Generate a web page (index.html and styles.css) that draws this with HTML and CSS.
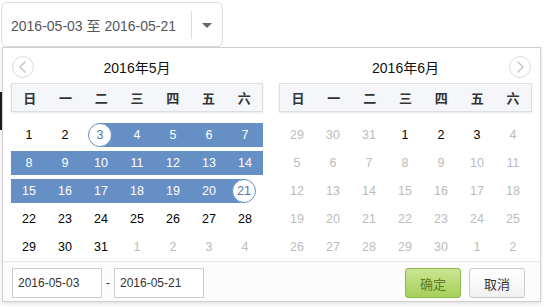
FILE: index.html
```html
<!DOCTYPE html>
<html lang="zh-CN">
<head>
<meta charset="utf-8">
<title>日期范围选择</title>
<link rel="stylesheet" href="styles.css">
</head>
<body>
<div class="stage">
  <div class="behind"></div>
  <div class="picker">
    <div class="value">2016-05-03 至 2016-05-21</div>
    <div class="sep"></div>
    <div class="caret-box"><span class="caret"></span></div>
  </div>
  <div class="panel">
    <div class="months">
      <div class="month">
        <div class="month-head">
          <button class="nav"><svg viewBox="0 0 22 22" width="22" height="22"><polyline points="13,6 8,11 13,16" fill="none" stroke="#c8c8c8" stroke-width="1.6" stroke-linecap="round" stroke-linejoin="round"/></svg></button>
          <div class="title">2016年5月</div>
          <div></div>
        </div>
        <div class="week"><span>日</span><span>一</span><span>二</span><span>三</span><span>四</span><span>五</span><span>六</span></div>
        <div class="days">
          <div class="day">1</div><div class="day">2</div><div class="day start"><span class="ring">3</span></div><div class="day in">4</div><div class="day in">5</div><div class="day in">6</div><div class="day in">7</div>
          <div class="day in">8</div><div class="day in">9</div><div class="day in">10</div><div class="day in">11</div><div class="day in">12</div><div class="day in">13</div><div class="day in">14</div>
          <div class="day in">15</div><div class="day in">16</div><div class="day in">17</div><div class="day in">18</div><div class="day in">19</div><div class="day in">20</div><div class="day end"><span class="ring">21</span></div>
          <div class="day">22</div><div class="day">23</div><div class="day">24</div><div class="day">25</div><div class="day">26</div><div class="day">27</div><div class="day">28</div>
          <div class="day">29</div><div class="day">30</div><div class="day">31</div><div class="day off">1</div><div class="day off">2</div><div class="day off">3</div><div class="day off">4</div>
        </div>
      </div>
      <div class="month">
        <div class="month-head">
          <div></div>
          <div class="title">2016年6月</div>
          <button class="nav"><svg viewBox="0 0 22 22" width="22" height="22"><polyline points="9,6 14,11 9,16" fill="none" stroke="#c8c8c8" stroke-width="1.6" stroke-linecap="round" stroke-linejoin="round"/></svg></button>
        </div>
        <div class="week"><span>日</span><span>一</span><span>二</span><span>三</span><span>四</span><span>五</span><span>六</span></div>
        <div class="days">
          <div class="day off">29</div><div class="day off">30</div><div class="day off">31</div><div class="day">1</div><div class="day">2</div><div class="day">3</div><div class="day off">4</div>
          <div class="day off">5</div><div class="day off">6</div><div class="day off">7</div><div class="day off">8</div><div class="day off">9</div><div class="day off">10</div><div class="day off">11</div>
          <div class="day off">12</div><div class="day off">13</div><div class="day off">14</div><div class="day off">15</div><div class="day off">16</div><div class="day off">17</div><div class="day off">18</div>
          <div class="day off">19</div><div class="day off">20</div><div class="day off">21</div><div class="day off">22</div><div class="day off">23</div><div class="day off">24</div><div class="day off">25</div>
          <div class="day off">26</div><div class="day off">27</div><div class="day off">28</div><div class="day off">29</div><div class="day off">30</div><div class="day off">1</div><div class="day off">2</div>
        </div>
      </div>
    </div>
    <div class="footer">
      <input class="date-input" type="text" value="2016-05-03">
      <span class="dash">-</span>
      <input class="date-input" type="text" value="2016-05-21">
      <div class="spacer"></div>
      <button class="btn ok">确定</button>
      <button class="btn cancel">取消</button>
    </div>
  </div>
</div>
</body>
</html>
```
FILE: styles.css
```css
html, body {
  margin: 0;
  padding: 0;
  background: #fff;
}
.stage {
  position: relative;
  width: 548px;
  height: 307px;
  overflow: hidden;
  font-family: "Liberation Sans", "Noto Sans CJK SC", sans-serif;
}
.behind {
  position: absolute;
  left: 0;
  top: 92px;
  width: 3px;
  height: 38px;
  background: #1e1e1e;
  z-index: 0;
}
.picker {
  position: relative;
  z-index: 1;
  margin: 2px 0 0 1px;
  width: 222px;
  height: 45px;
  box-sizing: border-box;
  border: 1px solid #dcdcdc;
  border-radius: 6px;
  background: #fff;
  display: flex;
  align-items: center;
}
.value {
  flex: 1;
  padding-left: 9px;
  font-size: 14px;
  color: #555;
  white-space: nowrap;
}
.sep {
  width: 1px;
  height: 28px;
  background: #dcdcdc;
}
.caret-box {
  width: 30px;
  display: flex;
  justify-content: center;
  align-items: center;
}
.caret {
  width: 0;
  height: 0;
  border-left: 5px solid transparent;
  border-right: 5px solid transparent;
  border-top: 5px solid #666;
  margin-top: 2px;
}
.panel {
  position: relative;
  z-index: 2;
  margin-left: 2px;
  width: 539px;
  height: 255px;
  box-sizing: border-box;
  border: 1px solid #cfcfcf;
  background: #fff;
  box-shadow: 0 2px 4px rgba(0, 0, 0, 0.12);
  display: flex;
  flex-direction: column;
}
.months {
  display: flex;
  gap: 16px;
  padding: 8px 8px 0;
}
.month {
  width: 252px;
}
.month + .month {
  width: 253px;
}
.month-head {
  height: 22px;
  display: grid;
  grid-template-columns: 24px 1fr 24px;
  align-items: center;
  margin-bottom: 5px;
}
.title {
  text-align: center;
  font-size: 14px;
  color: #111;
}
.nav {
  width: 22px;
  height: 22px;
  padding: 0;
  margin: 0 0 0 1px;
  border: 1px solid #dcdcdc;
  border-radius: 50%;
  background: #fff;
  box-sizing: border-box;
  display: flex;
  align-items: center;
  justify-content: center;
}
.nav svg {
  display: block;
  flex: none;
}
.week {
  height: 29px;
  box-sizing: border-box;
  border: 1px solid #dedede;
  background: #f4f6f9;
  box-shadow: 0 1px 2px rgba(0, 0, 0, 0.1);
  display: grid;
  grid-template-columns: repeat(7, 1fr);
  align-items: center;
  text-align: center;
  font-family: "Noto Sans CJK SC", sans-serif;
  font-weight: bold;
  font-size: 13px;
  color: #333;
}
.days {
  margin-top: 9px;
  display: grid;
  grid-template-columns: repeat(7, 36px);
  grid-auto-rows: 28px;
}
.day {
  display: flex;
  align-items: center;
  justify-content: center;
  font-size: 12.5px;
  color: #000;
  background-repeat: no-repeat;
}
.day.off {
  color: #bbb;
}
.day.in {
  color: #fff;
  background-image: linear-gradient(#6690c5, #6690c5);
  background-size: 100% 24px;
  background-position: center center;
}
.day.start {
  background-image: linear-gradient(#6690c5, #6690c5);
  background-size: 50% 24px;
  background-position: right center;
}
.day.end {
  background-image: linear-gradient(#6690c5, #6690c5);
  background-size: 50% 24px;
  background-position: left center;
}
.ring {
  width: 24px;
  height: 24px;
  box-sizing: border-box;
  border: 1px solid #6690c5;
  border-radius: 50%;
  background: #fff;
  color: #5577a8;
  display: flex;
  align-items: center;
  justify-content: center;
  margin-left: -2px;
}
.footer {
  margin-top: auto;
  border-top: 1px solid #e6e6e6;
  background: #fcfcfc;
  height: 40px;
  box-sizing: border-box;
  padding: 6px 15px 3px 9px;
  display: flex;
  align-items: flex-start;
}
.date-input {
  width: 90px;
  height: 30px;
  box-sizing: border-box;
  border: 1px solid #cccccc;
  padding: 0 5px;
  margin: 0;
  font-family: "Liberation Sans", sans-serif;
  font-size: 12px;
  color: #333;
  background: #fff;
  outline: none;
}
.dash {
  width: 12px;
  text-align: center;
  font-size: 12px;
  color: #333;
  line-height: 30px;
}
.spacer {
  flex: 1;
}
.btn {
  width: 56px;
  height: 30px;
  box-sizing: border-box;
  border-radius: 3px;
  font-family: "Noto Sans CJK SC", sans-serif;
  font-size: 13px;
  padding: 0;
  margin: 0;
}
.btn + .btn {
  margin-left: 8px;
}
.ok {
  background: linear-gradient(#cbe593, #a5cf5a);
  border: 1px solid #8cb94b;
  color: #5d7b22;
}
.cancel {
  background: linear-gradient(#ffffff, #f1f1f1);
  border: 1px solid #c9c9c9;
  color: #333;
}
```
